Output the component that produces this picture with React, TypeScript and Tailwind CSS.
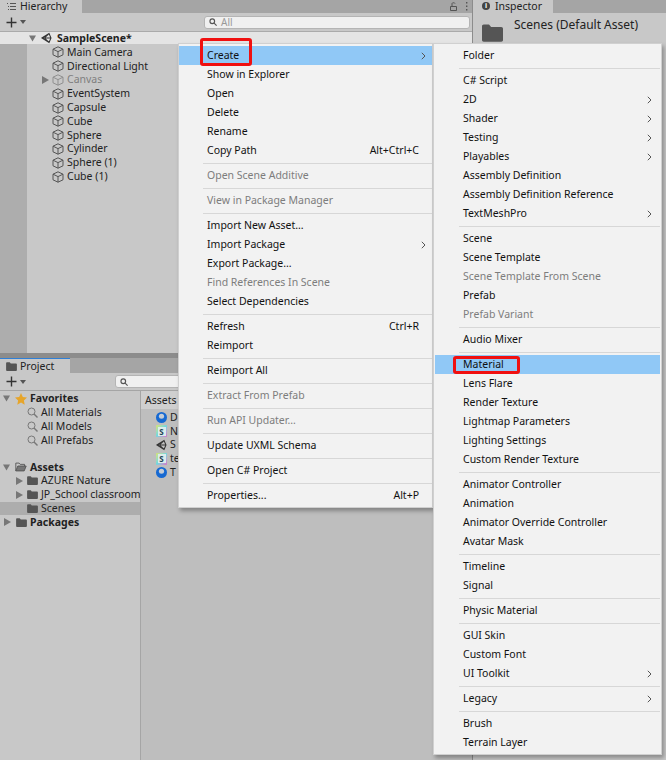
import React from 'react';

const font = { fontFamily: '"Noto Sans", sans-serif' };

type MenuItem =
  | { sep: true }
  | { label: string; shortcut?: string; arrow?: boolean; disabled?: boolean; active?: boolean; sep?: false };

const S: MenuItem = { sep: true };

const mainMenu: MenuItem[] = [
  { label: 'Create', arrow: true, active: true },
  { label: 'Show in Explorer' },
  { label: 'Open' },
  { label: 'Delete' },
  { label: 'Rename' },
  { label: 'Copy Path', shortcut: 'Alt+Ctrl+C' },
  S,
  { label: 'Open Scene Additive', disabled: true },
  S,
  { label: 'View in Package Manager', disabled: true },
  S,
  { label: 'Import New Asset...' },
  { label: 'Import Package', arrow: true },
  { label: 'Export Package...' },
  { label: 'Find References In Scene', disabled: true },
  { label: 'Select Dependencies' },
  S,
  { label: 'Refresh', shortcut: 'Ctrl+R' },
  { label: 'Reimport' },
  S,
  { label: 'Reimport All' },
  S,
  { label: 'Extract From Prefab', disabled: true },
  S,
  { label: 'Run API Updater...', disabled: true },
  S,
  { label: 'Update UXML Schema' },
  S,
  { label: 'Open C# Project' },
  S,
  { label: 'Properties...', shortcut: 'Alt+P' },
];

const subMenu: MenuItem[] = [
  { label: 'Folder' },
  S,
  { label: 'C# Script' },
  { label: '2D', arrow: true },
  { label: 'Shader', arrow: true },
  { label: 'Testing', arrow: true },
  { label: 'Playables', arrow: true },
  { label: 'Assembly Definition' },
  { label: 'Assembly Definition Reference' },
  { label: 'TextMeshPro', arrow: true },
  S,
  { label: 'Scene' },
  { label: 'Scene Template' },
  { label: 'Scene Template From Scene', disabled: true },
  { label: 'Prefab' },
  { label: 'Prefab Variant', disabled: true },
  S,
  { label: 'Audio Mixer' },
  S,
  { label: 'Material', active: true },
  { label: 'Lens Flare' },
  { label: 'Render Texture' },
  { label: 'Lightmap Parameters' },
  { label: 'Lighting Settings' },
  { label: 'Custom Render Texture' },
  S,
  { label: 'Animator Controller' },
  { label: 'Animation' },
  { label: 'Animator Override Controller' },
  { label: 'Avatar Mask' },
  S,
  { label: 'Timeline' },
  { label: 'Signal' },
  S,
  { label: 'Physic Material' },
  S,
  { label: 'GUI Skin' },
  { label: 'Custom Font' },
  { label: 'UI Toolkit', arrow: true },
  S,
  { label: 'Legacy', arrow: true },
  S,
  { label: 'Brush' },
  { label: 'Terrain Layer' },
];

const hierarchy = ['Main Camera', 'Directional Light', 'Canvas', 'EventSystem', 'Capsule', 'Cube', 'Sphere', 'Cylinder', 'Sphere (1)', 'Cube (1)'];

const CubeIcon = ({ faded }: { faded?: boolean }) => (
  <svg width="12" height="12" viewBox="0 0 12 12" fill="none" stroke={faded ? '#8f8f8f' : '#555'} strokeWidth="1" className="shrink-0">
    <path d="M6 .8 11 3.2V8.8L6 11.2 1 8.8V3.2ZM1 3.2 6 5.6 11 3.2M6 5.6V11.2" />
  </svg>
);

const UnityIcon = () => (
  <svg width="11" height="12" viewBox="0 0 13 13" fill="none" stroke="#333" strokeWidth="1.2" className="shrink-0">
    <path d="M1 6.5 9.5 1.2 11.8 6.5 9.5 11.8ZM1 6.5H11.8M4 6.5 9.5 1.2M4 6.5 9.5 11.8" />
  </svg>
);

const Folder = ({ className }: { className: string }) => (
  <svg viewBox="0 0 12 10" fill="#555" className={className}>
    <path d="M0 1.2C0 .6.4.2 1 .2H4L5.2 1.6H11C11.6 1.6 12 2 12 2.6V9C12 9.6 11.6 10 11 10H1C.4 10 0 9.6 0 9Z" />
  </svg>
);

const OpenFolder = () => (
  <svg width="12" height="10" viewBox="0 0 13 11" fill="none" stroke="#555" className="shrink-0">
    <path d="M.8 9.8V1.2H4.4L5.6 2.6H10.4V4.4" />
    <path d="M.8 9.8 3 4.4H12.2L10 9.8Z" fill="#777" />
  </svg>
);

const Search = () => (
  <svg width="11" height="11" viewBox="0 0 11 11" fill="none" stroke="#777" strokeWidth="1" className="shrink-0">
    <circle cx="4.5" cy="4.5" r="3.5" />
    <path d="M7 7 10.5 10.5" strokeWidth="1.4" />
  </svg>
);

const Ball = () => (
  <svg width="11" height="11" viewBox="0 0 11 11" className="shrink-0">
    <circle cx="5.5" cy="5.5" r="5.5" fill="#1669d2" />
    <ellipse cx="5.5" cy="4.2" rx="2.6" ry="2.5" fill="#c4ccd6" />
  </svg>
);

const ShaderIcon = () => (
  <span className="w-[11px] h-[12px] shrink-0 rounded-[1px] bg-gradient-to-br from-[#d9e36a] via-[#6fd6e0] to-[#d070c8] flex items-center justify-center">
    <span className="w-[8px] h-[9px] bg-[#dcecec] text-[8px] font-bold leading-[9px] text-center text-[#245]">S</span>
  </span>
);

const TriRight = () => (
  <svg width="7" height="8" viewBox="0 0 7 8" fill="#777" className="shrink-0">
    <path d="M0 0 7 4 0 8Z" />
  </svg>
);

const TriDown = () => (
  <svg width="7" height="7" viewBox="0 0 8 7" fill="#777" className="shrink-0">
    <path d="M0 0H8L4 7Z" />
  </svg>
);

const Chevron = () => (
  <svg width="5" height="8" viewBox="0 0 5 8" fill="none" stroke="#555" strokeWidth="1" className="shrink-0">
    <path d="M.8.8 4 4 .8 7.2" />
  </svg>
);

const Plus = () => (
  <div className="flex items-center gap-[3px]">
    <svg width="11" height="11" viewBox="0 0 11 11" stroke="#333" strokeWidth="1.4">
      <path d="M5.5.5V10.5M.5 5.5H10.5" />
    </svg>
    <svg width="6" height="4" viewBox="0 0 6 4" fill="#555">
      <path d="M0 0H6L3 4Z" />
    </svg>
  </div>
);

const SearchField = ({ className, label }: { className: string; label?: string }) => (
  <div className={`h-[13px] rounded-[3px] bg-[#f0f0f0] border border-[#b4b4b4] flex items-center gap-1 pl-1 ${className}`}>
    <svg width="8" height="8" viewBox="0 0 11 11" fill="none" stroke="#555" strokeWidth="1.6" className="shrink-0">
      <circle cx="4.5" cy="4.5" r="3.2" />
      <path d="M7 7 10.5 10.5" />
    </svg>
    {label && <span className="text-[10px] leading-[11px] text-[#999]">{label}</span>}
  </div>
);

const Menu = ({ items, className, rowPad }: { items: MenuItem[]; className: string; rowPad: string }) => (
  <div className={`absolute bg-[#f2f2f2] border border-[#d0d0d0] py-[2px] shadow-[2px_3px_4px_rgba(0,0,0,0.3)] ${className}`}>
    {items.map((item, i) =>
      item.sep ? (
        <div key={i} className="h-[6px] flex items-center pl-[24px]">
          <div className="h-px w-full bg-[#d7d7d7]" />
        </div>
      ) : (
        <div
          key={i}
          className={`h-[19px] flex items-center pl-[28px] text-[10.5px] ${rowPad} ${item.active ? 'bg-[#90c8f6]' : ''} ${item.disabled ? 'text-[#7d7d7d]' : 'text-[#111]'}`}
        >
          <span className="whitespace-nowrap">{item.label}</span>
          <span className="ml-auto flex items-center whitespace-nowrap">
            {item.shortcut && <span className="mr-[7px]">{item.shortcut}</span>}
            {item.arrow && <Chevron />}
          </span>
        </div>
      ),
    )}
  </div>
);

const TreeRow = ({ icon, label, pad, bold, selected }: { icon: React.ReactNode; label: string; pad: string; bold?: boolean; selected?: boolean }) => (
  <div className={`h-[13.8px] flex items-center gap-[3px] text-[10.5px] leading-[13px] text-[#222] ${pad} ${bold ? 'font-bold' : ''} ${selected ? 'bg-[#adadad]' : ''}`}>
    {icon}
    <span className="whitespace-nowrap">{label}</span>
  </div>
);

export default function App() {
  return (
    <div className="relative w-[666px] h-[760px] overflow-hidden flex bg-[#8c8c8c]" style={font}>
      <div className="w-[472px] h-full flex flex-col shrink-0">
        {/* Hierarchy */}
        <div className="h-[353px] flex flex-col bg-[#c8c8c8]">
          <div className="h-[13px] bg-[#a5a5a5] flex items-end">
            <div className="w-[82px] h-[13px] pb-px bg-[#c8c8c8] flex items-center gap-[4px] pl-[7px] text-[10.5px] leading-[12px] text-[#222]">
              <svg width="9" height="7" viewBox="0 0 9 7" stroke="#555" className="shrink-0">
                <path d="M0 .5H1M3 .5H9M1 3.5H2M3 3.5H9M1 6.5H2M3 6.5H9" />
              </svg>
              Hierarchy
            </div>
            <div className="ml-auto pr-1 pb-[2px] flex items-center gap-2 text-[#555]">
              <svg width="7" height="9" viewBox="0 0 7 9" fill="none" stroke="#555">
                <path d="M.5 4.5H6.5V8.5H.5ZM2 4.5V1.5C2 .5 5 .5 5 1.5" />
              </svg>
              <svg width="3" height="9" viewBox="0 0 3 9" fill="#555">
                <path d="M1 0H2.4V1.6H1ZM1 3.5H2.4V5.1H1ZM1 7H2.4V8.6H1Z" />
              </svg>
            </div>
          </div>
          <div className="h-[19px] flex items-center justify-between pl-[6px] pr-[2px] border-b border-[#aaaaaa]">
            <Plus />
            <SearchField className="w-[266px]" label="All" />
          </div>
          <div className="h-[12px] bg-[#e4e4e4] flex items-center pl-[29px] gap-[5px] text-[10.5px] leading-[12px] font-bold text-[#222]">
            <TriDown />
            <UnityIcon />
            <span>SampleScene*</span>
          </div>
          <div className="flex-1 flex">
            <div className="w-[27px] bg-[#adadad]" />
            <div className="flex-1 pl-[25px] pt-[1.5px]">
              {hierarchy.map((name) => (
                <div key={name} className={`h-[13.8px] flex items-center gap-[3px] text-[10.5px] leading-[13px] relative ${name === 'Canvas' ? 'text-[#7f7f7f]' : 'text-[#222]'}`}>
                  {name === 'Canvas' && (
                    <span className="absolute left-[-10px]">
                      <TriRight />
                    </span>
                  )}
                  <CubeIcon faded={name === 'Canvas'} />
                  <span className="whitespace-nowrap">{name}</span>
                </div>
              ))}
            </div>
          </div>
        </div>
        <div className="h-[5px] bg-[#8c8c8c]" />
        {/* Project */}
        <div className="flex-1 flex flex-col bg-[#c8c8c8]">
          <div className="h-[15px] bg-[#a5a5a5]">
            <div className="w-[70px] h-[15px] bg-[#c8c8c8] border-t border-[#2f7fd6] flex items-center gap-[3px] pl-[6px] text-[10.5px] leading-[13px] text-[#222]">
              <Folder className="w-[11px] h-[9px] shrink-0" />
              Project
            </div>
          </div>
          <div className="h-[18px] flex items-center pl-[6px] gap-[89px] border-b border-[#a5a5a5]">
            <Plus />
            <SearchField className="w-[90px]" />
          </div>
          <div className="flex-1 flex">
            <div className="w-[141px] border-r border-[#a5a5a5] pt-px overflow-hidden">
              <TreeRow pad="pl-[3px]" bold icon={<><TriDown /><svg width="12" height="12" viewBox="0 0 12 12" fill="#e6a52b" className="ml-[2px] shrink-0"><path d="M6 0 7.8 4 12 4.5 8.9 7.4 9.7 11.8 6 9.6 2.3 11.8 3.1 7.4 0 4.5 4.2 4Z" /></svg></>} label="Favorites" />
              <TreeRow pad="pl-[27px]" icon={<Search />} label="All Materials" />
              <TreeRow pad="pl-[27px]" icon={<Search />} label="All Models" />
              <TreeRow pad="pl-[27px]" icon={<Search />} label="All Prefabs" />
              <div className="h-[13px]" />
              <TreeRow pad="pl-[3px]" bold icon={<><TriDown /><span className="ml-[2px] flex"><OpenFolder /></span></>} label="Assets" />
              <TreeRow pad="pl-[16px]" icon={<><TriRight /><span className="ml-px flex"><Folder className="w-[11px] h-[9px]" /></span></>} label="AZURE Nature" />
              <TreeRow pad="pl-[16px]" icon={<><TriRight /><span className="ml-px flex"><Folder className="w-[11px] h-[9px]" /></span></>} label="JP_School classroom" />
              <TreeRow pad="pl-[27px]" selected icon={<Folder className="w-[11px] h-[9px] shrink-0" />} label="Scenes" />
              <TreeRow pad="pl-[4px]" bold icon={<><TriRight /><span className="ml-[2px] flex"><Folder className="w-[11px] h-[9px]" /></span></>} label="Packages" />
            </div>
            <div className="flex-1 bg-[#bebebe]">
              <div className="h-[18px] bg-[#cfcfcf] flex items-center pl-[4px] text-[10.5px] leading-[13px] text-[#222]">Assets</div>
              <div className="pl-[15px] pt-[1.5px] flex flex-col text-[10.5px] leading-[13px] text-[#222]">
                {['ball', 'shader', 'unity', 'shader', 'ball'].map((kind, i) => (
                  <div key={i} className="h-[13.8px] flex items-center gap-[3px]">
                    {kind === 'ball' && <Ball />}
                    {kind === 'shader' && <ShaderIcon />}
                    {kind === 'unity' && <UnityIcon />}
                    <span>{['D', 'N', 'S', 'te', 'T'][i]}</span>
                  </div>
                ))}
              </div>
            </div>
          </div>
        </div>
      </div>
      {/* Inspector */}
      <div className="ml-px flex-1 bg-[#c8c8c8] flex flex-col">
        <div className="h-[13px] bg-[#a5a5a5]">
          <div className="w-[80px] h-[13px] pb-px bg-[#c8c8c8] flex items-center gap-[5px] pl-[9px] text-[10.5px] leading-[12px] text-[#222]">
            <span className="w-[8px] h-[8px] rounded-full bg-[#444] text-[7px] leading-[8px] font-bold text-center text-white">i</span>
            Inspector
          </div>
        </div>
        <div className="flex pl-[9px] pt-[4px] gap-[11px] text-[12px] leading-[16px] text-[#222]">
          <Folder className="w-[21px] h-[18px] mt-[7px] shrink-0" />
          <span className="whitespace-nowrap">Scenes (Default Asset)</span>
        </div>
      </div>

      <Menu items={mainMenu} rowPad="pr-[6px]" className="left-[178px] top-[43px] w-[255px]" />
      <Menu items={subMenu} rowPad="pr-[8px]" className="left-[433px] top-[43px] w-[229px] px-px" />

      {/* red highlights */}
      <div className="absolute left-[200px] top-[38px] w-[52px] h-[28px] border-[3px] border-[#f01010] rounded-[3px]" />
      <div className="absolute left-[453px] top-[356px] w-[67px] h-[18px] border-[3px] border-[#f01010] rounded-[3px]" />
    </div>
  );
}
